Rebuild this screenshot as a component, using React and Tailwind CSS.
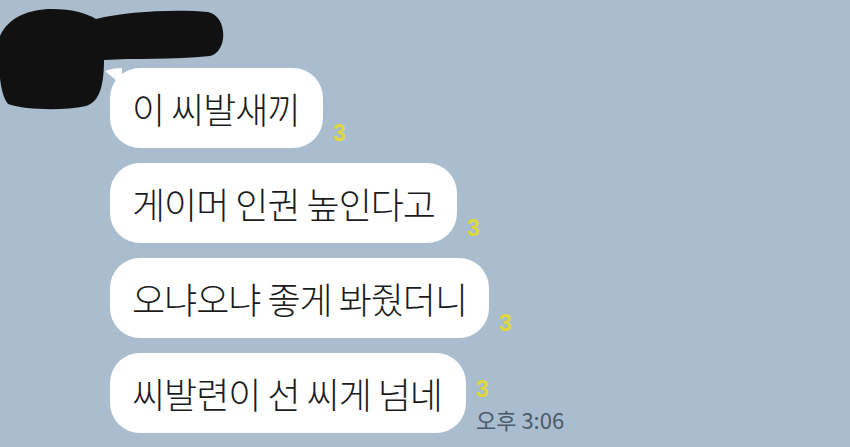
const messages = [
  { text: '이 씨발새끼', width: 213, read: 3 },
  { text: '게이머 인권 높인다고', width: 347, read: 3 },
  { text: '오냐오냐 좋게 봐줬더니', width: 379, read: 3 },
  { text: '씨발련이 선 씨게 넘네', width: 356, read: 3, time: '오후 3:06' },
];

function Scribble() {
  // censor blob over the profile picture / name
  return (
    <svg className="absolute left-0 top-0" width="230" height="115" viewBox="0 0 230 115">
      <path
        d="M0 36 C8 18 28 9 52 9 C72 9 86 13 96 19 C126 11 178 9 208 12 C228 16 228 52 210 56 C172 60 134 58 104 60 C104 84 100 102 86 106 C62 111 26 110 8 104 C-2 92 -2 56 0 36 Z"
        fill="#111"
      />
    </svg>
  );
}

function Bubble({ text, width, first }) {
  return (
    <div
      className="relative h-[80px] rounded-[30px] bg-white flex items-center pl-[22px]"
      style={{ width }}
    >
      {first && (
        <svg className="absolute -left-[6px] top-0" width="20" height="20" viewBox="0 0 20 20">
          <path d="M1 3 C6 1 12 0 18 0 L18 18 C12 12 6 7 1 3 Z" fill="#fff" />
        </svg>
      )}
      <span className="text-[36px] font-light tracking-[-1px] leading-none text-[#1b1b1b] whitespace-nowrap">
        {text}
      </span>
    </div>
  );
}

export default function App() {
  return (
    <div className="relative w-[850px] h-[447px] overflow-hidden bg-[#a9bdce] font-['Noto_Sans_CJK_KR','Noto_Sans',sans-serif]">
      <div className="flex flex-col gap-[15px] pt-[68px] pl-[110px]">
        {messages.map((m, i) => (
          <div key={i} className="flex items-end gap-[10px]">
            <Bubble text={m.text} width={m.width} first={i === 0} />
            <div className="flex flex-col items-start pb-[3px]">
              <span className="text-[23px] font-bold leading-none text-[#ded83c] font-['Liberation_Sans',sans-serif]">
                {m.read}
              </span>
              {m.time && (
                <span className="mt-[7px] text-[22px] leading-none text-[#4b5a69] whitespace-nowrap">
                  {m.time}
                </span>
              )}
            </div>
          </div>
        ))}
      </div>
      <Scribble />
    </div>
  );
}
